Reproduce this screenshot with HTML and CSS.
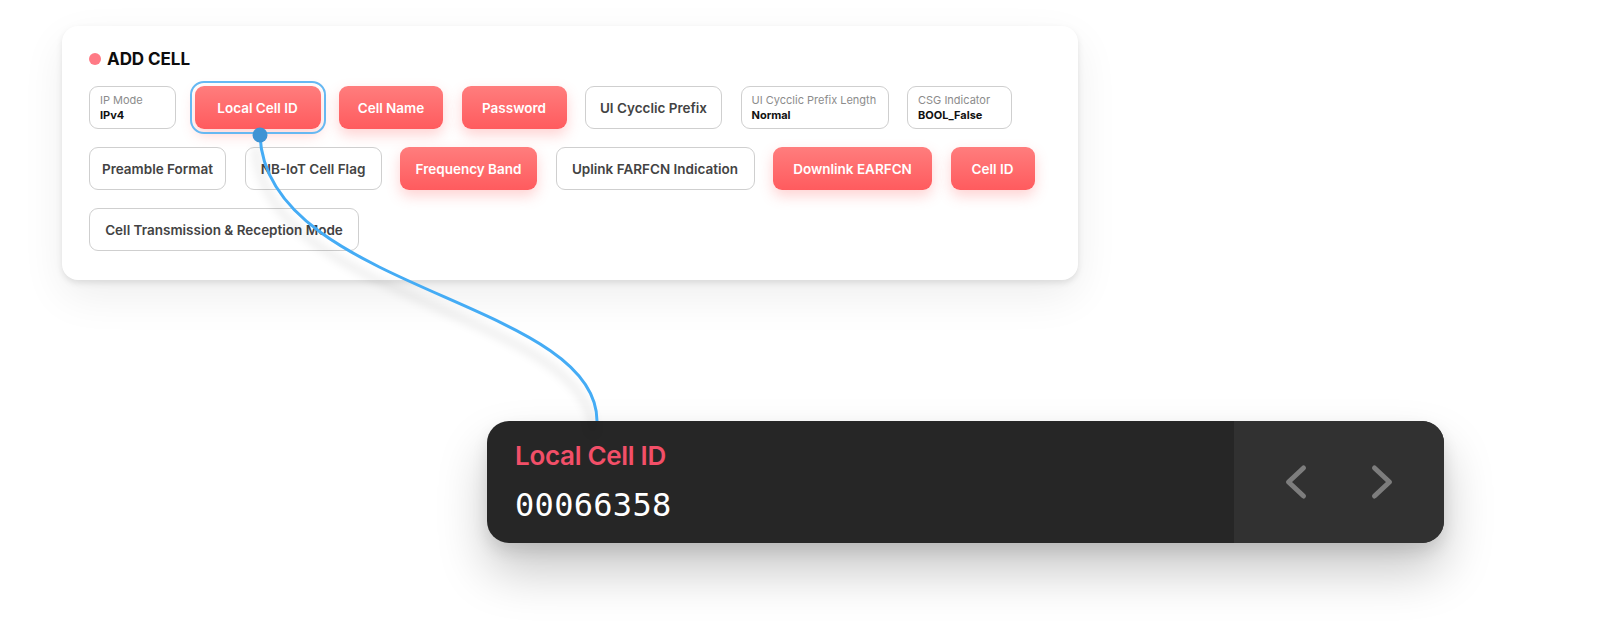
FILE: index.html
```html
<!DOCTYPE html>
<html lang="en">
<head>
<meta charset="utf-8">
<title>Add Cell</title>
<link rel="stylesheet" href="styles.css">
</head>
<body>
<div class="canvas">
  <section class="card">
    <h2 class="card-title"><span class="dot"></span>ADD CELL</h2>
    <div class="chips">
      <div class="chip field w-ip"><span class="label">IP Mode</span><span class="value">IPv4</span></div>
      <div class="chip primary selected w-lcid">Local Cell ID</div>
      <div class="chip primary w-cname">Cell Name</div>
      <div class="chip primary w-pass">Password</div>
      <div class="chip outline w-137">UI Cycclic Prefix</div>
      <div class="chip field w-uicpl"><span class="label">UI Cycclic Prefix Length</span><span class="value">Normal</span></div>
      <div class="chip field w-csg"><span class="label">CSG Indicator</span><span class="value">BOOL_False</span></div>
      <div class="chip outline w-137">Preamble Format</div>
      <div class="chip outline w-137">NB-IoT Cell Flag</div>
      <div class="chip primary w-137">Frequency Band</div>
      <div class="chip outline w-uplink">Uplink FARFCN Indication</div>
      <div class="chip primary w-downlink">Downlink EARFCN</div>
      <div class="chip primary w-cellid">Cell ID</div>
      <div class="chip outline w-mode">Cell Transmission &amp; Reception Mode</div>
    </div>
  </section>

  <section class="detail">
    <div class="detail-main">
      <div class="detail-title">Local Cell ID</div>
      <div class="detail-value">00066358</div>
    </div>
    <div class="detail-nav">
      <svg class="chev" width="28" height="40" viewBox="0 0 28 40"><polyline points="21.5,6 6.5,20 21.5,34"/></svg>
      <svg class="chev" width="28" height="40" viewBox="0 0 28 40"><polyline points="6.5,6 21.5,20 6.5,34"/></svg>
    </div>
  </section>

  <svg class="connector" width="1600" height="644" viewBox="0 0 1600 644">
    <path class="wire" d="M260 135 C 265 290, 597 300, 597 421"/>
    <circle class="wire-dot" cx="260" cy="135" r="7.5"/>
  </svg>
</div>
</body>
</html>
```

FILE: styles.css
```css
* { box-sizing: border-box; }

html, body {
  margin: 0;
  padding: 0;
  background: #ffffff;
  font-family: Inter, "Noto Sans", "Liberation Sans", sans-serif;
}

.canvas {
  position: relative;
  width: 1600px;
  height: 644px;
  padding: 26px 0 0 62px;
  overflow: hidden;
}

.card {
  width: 1016px;
  height: 254px;
  background: #ffffff;
  border-radius: 16px;
  padding: 23px 27px 29px 27px;
  box-shadow: 0 3px 6px rgba(0, 0, 0, 0.10), 0 16px 44px rgba(0, 0, 0, 0.07);
}

.card-title {
  margin: 0 0 17px 0;
  display: flex;
  align-items: center;
  gap: 6px;
  height: 20px;
  line-height: 20px;
  font-size: 17px;
  font-weight: 700;
  color: #0d0d0d;
  letter-spacing: -0.05px;
}

.dot {
  width: 12px;
  height: 12px;
  border-radius: 50%;
  background: #ff7a85;
  flex: none;
}

.chips {
  display: flex;
  flex-wrap: wrap;
  column-gap: 18.5px;
  row-gap: 18px;
  align-items: flex-start;
}

.chip {
  height: 43px;
  border-radius: 9px;
  display: flex;
  align-items: center;
  justify-content: center;
  font-size: 13.5px;
  font-weight: 600;
  white-space: nowrap;
  flex: none;
}

.chip.outline {
  border: 1px solid #cfcfcf;
  background: #fff;
  color: #434343;
}

.chip.primary {
  background: linear-gradient(180deg, #ff7d7d 0%, #ff5b5e 100%);
  color: #ffffff;
  box-shadow: 0 6px 14px rgba(255, 92, 92, 0.28);
}

.chip.selected {
  outline: 2px solid #66b8f2;
  outline-offset: 3.5px;
}

.chip.field {
  border: 1px solid #cfcfcf;
  background: #fff;
  flex-direction: column;
  align-items: flex-start;
  padding: 0 10px;
}

.chip.field .label {
  font-size: 11px;
  line-height: 15px;
  font-weight: 400;
  color: #8c8c8c;
}

.chip.field .value {
  font-size: 11px;
  line-height: 15px;
  font-weight: 700;
  color: #111;
}

.w-ip { width: 87px; }
.w-lcid { width: 126px; }
.w-cname { width: 104px; }
.w-pass { width: 105px; }
.w-137 { width: 137px; }
.w-uicpl { width: 148px; }
.w-csg { width: 105px; }
.w-uplink { width: 199px; }
.w-downlink { width: 159px; }
.w-cellid { width: 84px; }
.w-mode { width: 270px; }

.detail {
  margin: 141px 0 0 425px;
  width: 957px;
  height: 122px;
  border-radius: 22px;
  overflow: hidden;
  display: flex;
  background: #262626;
  box-shadow: 0 28px 50px rgba(0, 0, 0, 0.22), 0 8px 16px rgba(0, 0, 0, 0.10);
}

.detail-main {
  flex: 1;
  padding: 20px 0 0 28px;
  display: flex;
  flex-direction: column;
}

.detail-title {
  font-size: 26px;
  line-height: 30px;
  font-weight: 600;
  color: #f24f68;
  letter-spacing: -0.3px;
}

.detail-value {
  margin-top: 14px;
  font-family: "DejaVu Sans Mono", "Liberation Mono", monospace;
  font-size: 32px;
  line-height: 40px;
  color: #ffffff;
  letter-spacing: 0.3px;
}

.detail-nav {
  width: 210px;
  background: #313131;
  display: flex;
  align-items: center;
  justify-content: center;
  gap: 58px;
}

.chev polyline {
  fill: none;
  stroke: #7d7d7d;
  stroke-width: 5;
  stroke-linecap: round;
  stroke-linejoin: round;
}

.connector {
  position: absolute;
  left: 0;
  top: 0;
  pointer-events: none;
}

.wire {
  fill: none;
  stroke: #45acf5;
  stroke-width: 3;
  filter: drop-shadow(-4px 12px 5px rgba(0, 0, 0, 0.16));
}

.wire-dot {
  fill: #3f93d4;
}
```
